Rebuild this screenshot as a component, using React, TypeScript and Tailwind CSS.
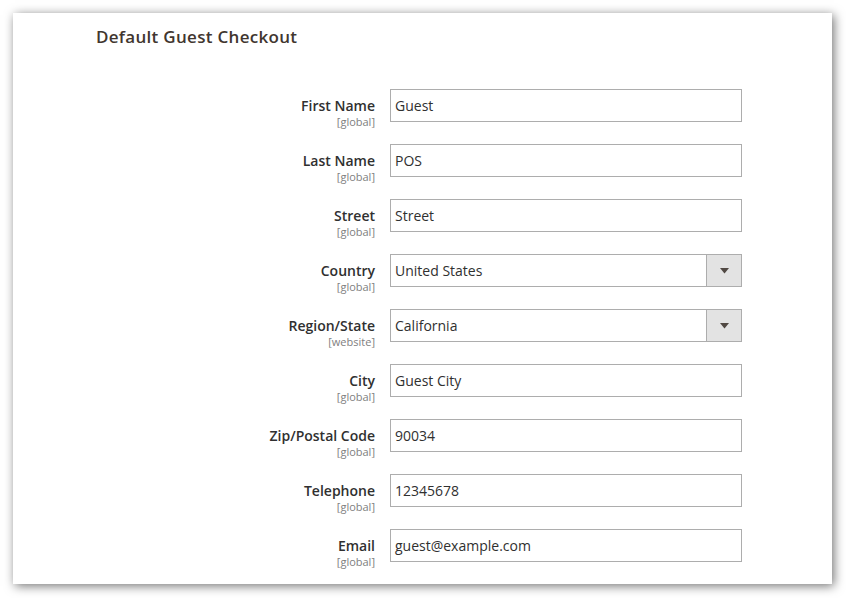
import React from 'react'

type Field = {
  label: string
  scope: string
  value: string
  select?: boolean
}

const fields: Field[] = [
  { label: 'First Name', scope: '[global]', value: 'Guest' },
  { label: 'Last Name', scope: '[global]', value: 'POS' },
  { label: 'Street', scope: '[global]', value: 'Street' },
  { label: 'Country', scope: '[global]', value: 'United States', select: true },
  { label: 'Region/State', scope: '[website]', value: 'California', select: true },
  { label: 'City', scope: '[global]', value: 'Guest City' },
  { label: 'Zip/Postal Code', scope: '[global]', value: '90034' },
  { label: 'Telephone', scope: '[global]', value: '12345678' },
  { label: 'Email', scope: '[global]', value: 'guest@example.com' },
]

function FieldRow({ field }: { field: Field }) {
  return (
    <div className="flex items-start h-[33px]">
      {/* label column */}
      <div className="w-[294px] pt-[8px] pr-[15px] flex flex-col items-end">
        <span className="text-[14px] leading-[18px] font-semibold text-[#303030]">{field.label}</span>
        <span className="text-[11px] leading-[14px] text-[#808080]">{field.scope}</span>
      </div>

      {/* control */}
      <div className="w-[352px] h-[33px] flex border border-[#adadad] bg-white">
        <div className="flex-1 flex items-center pl-[4px] text-[14px] text-[#303030]">{field.value}</div>
        {field.select && (
          <div className="w-[35px] flex items-center justify-center bg-[#e3e3e3] border-l border-[#adadad]">
            <svg width="9" height="6" viewBox="0 0 9 6">
              <path d="M0 0 H9 L4.5 5.5 Z" fill="#514943" />
            </svg>
          </div>
        )}
      </div>
    </div>
  )
}

export default function App() {
  return (
    <div className="w-[846px] h-[598px] bg-white pt-[13px] pl-[13px]" style={{ fontFamily: '"Open Sans", sans-serif' }}>
      <div className="w-[819px] h-[571px] bg-white shadow-[2px_2px_10px_rgba(0,0,0,0.55)] pl-[83px] pt-[14px]">
        <h2 className="text-[17px] leading-[20px] font-semibold text-[#41362f] tracking-[0.3px]">Default Guest Checkout</h2>

        <div className="mt-[42px] flex flex-col gap-[22px]">
          {fields.map((f) => (
            <FieldRow key={f.label} field={f} />
          ))}
        </div>
      </div>
    </div>
  )
}
